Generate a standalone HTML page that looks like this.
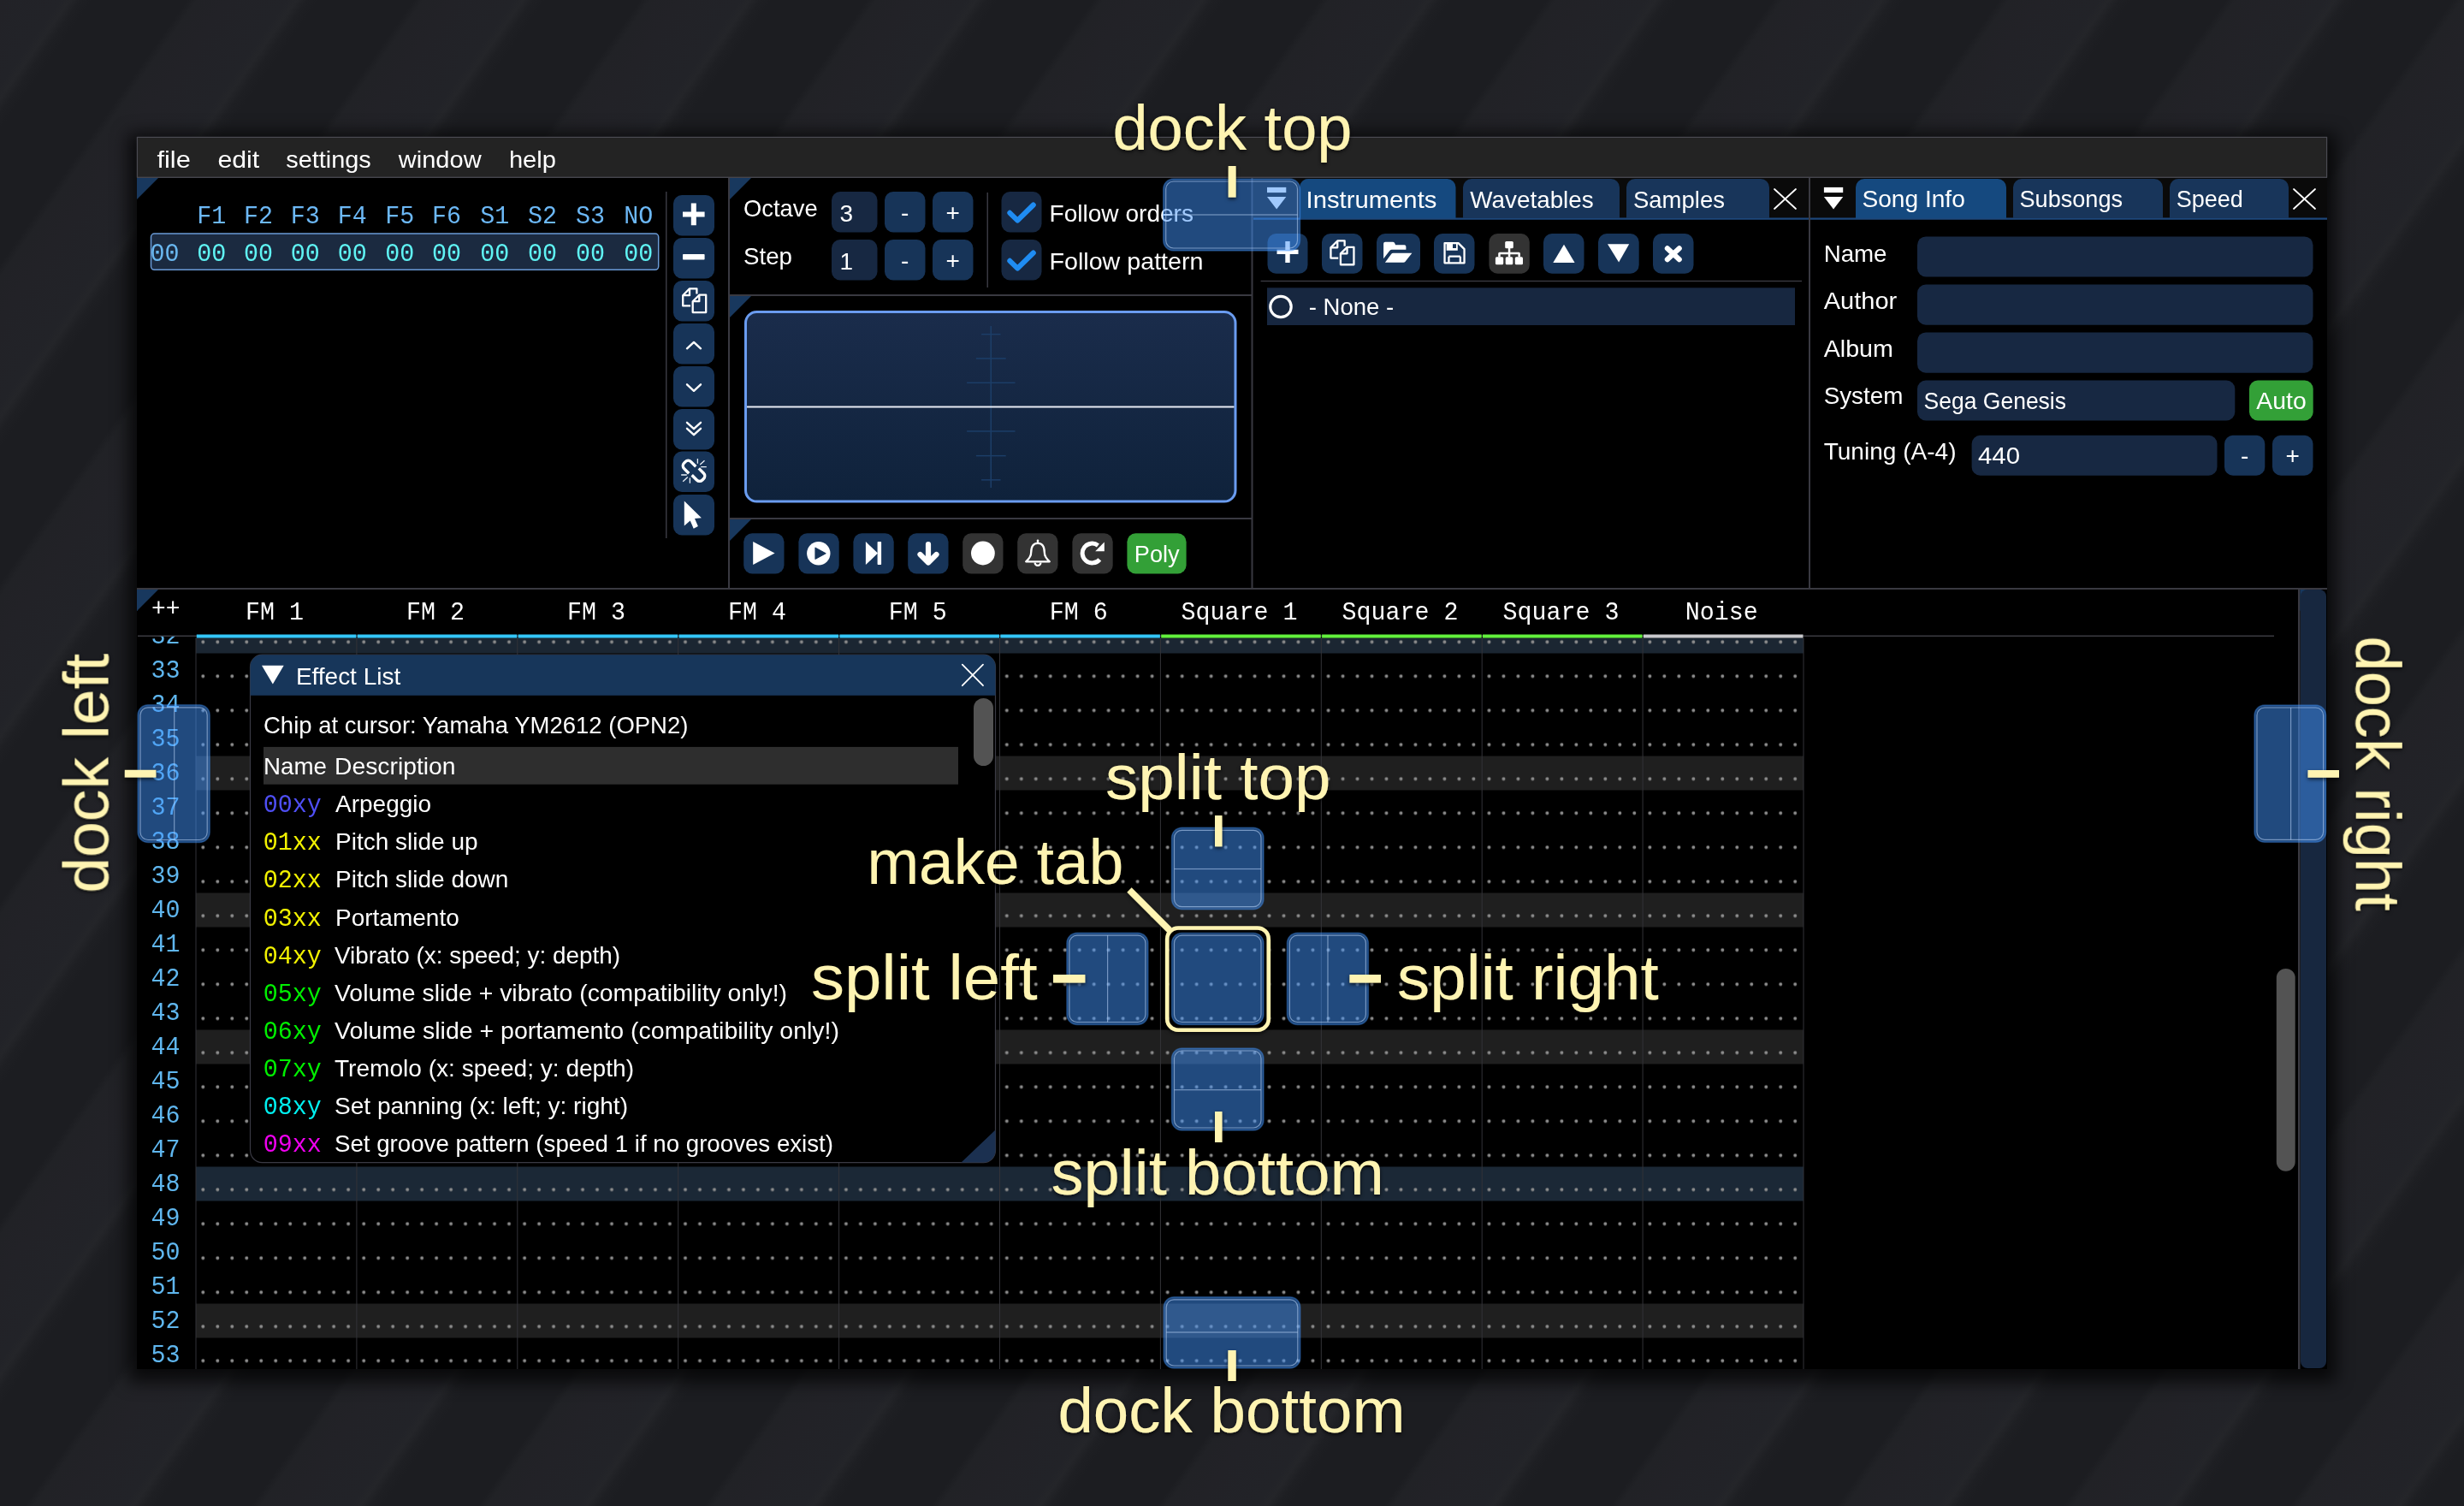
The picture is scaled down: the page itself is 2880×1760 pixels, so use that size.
<!DOCTYPE html>
<html><head><meta charset="utf-8"><style>
html,body{margin:0;padding:0;width:2880px;height:1760px;overflow:hidden}
body{background-color:#1f2024;background-image:repeating-linear-gradient(125.37deg,#222227 0px,#222328 57.7px,#242529 66.7px,#1e1f23 76.7px,#1c1d21 87.7px,#1c1d21 178.6px,#212226 187.6px,#222227 215.9px)}
svg{position:absolute;left:0;top:0;display:block;will-change:transform}
</style></head><body>
<svg width="2880" height="1760" viewBox="0 0 2880 1760">
<defs>
<style>
.sans{font-family:"Liberation Sans",sans-serif}
.mono{font-family:"Liberation Mono",monospace}
</style>
<pattern id="dots" patternUnits="userSpaceOnUse" width="16.98" height="40" x="0" y="0">
<circle cx="8.3" cy="26.7" r="2" fill="#8c8c8c"/>
</pattern>
<linearGradient id="scopeg" x1="0" y1="0" x2="0" y2="1">
<stop offset="0" stop-color="#1a2c4b"/><stop offset="1" stop-color="#0f223b"/>
</linearGradient>
<filter id="sh" x="-10%" y="-10%" width="120%" height="130%">
<feDropShadow dx="0" dy="2" stdDeviation="2" flood-color="#000" flood-opacity="0.7"/>
</filter>
<filter id="wsh" x="-5%" y="-5%" width="110%" height="110%">
<feGaussianBlur stdDeviation="10"/>
</filter>
</defs>
<rect x="150.0" y="156.0" width="2580.0" height="1459.0" fill="rgba(0,0,0,0.72)" filter="url(#wsh)"/>
<rect x="160.0" y="160.0" width="2560.0" height="1440.0" fill="#000"/>
<rect x="160.0" y="160.0" width="2560.0" height="47.0" fill="#232323"/>
<rect x="160.0" y="159.8" width="2560.0" height="1.2" fill="#4a4a52"/>
<rect x="160.0" y="206.6" width="2560.0" height="1.4" fill="#45454d"/>
<rect x="159.8" y="160.0" width="1.2" height="47.5" fill="#4a4a52"/>
<rect x="2719.0" y="160.0" width="1.2" height="47.5" fill="#4a4a52"/>
<text class="sans" x="183.4" y="195.5" font-size="28" fill="#fff" textLength="39.4" lengthAdjust="spacingAndGlyphs">file</text>
<text class="sans" x="254.4" y="195.5" font-size="28" fill="#fff" textLength="48.8" lengthAdjust="spacingAndGlyphs">edit</text>
<text class="sans" x="334.2" y="195.5" font-size="28" fill="#fff" textLength="99.6" lengthAdjust="spacingAndGlyphs">settings</text>
<text class="sans" x="465.8" y="195.5" font-size="28" fill="#fff" textLength="96.8" lengthAdjust="spacingAndGlyphs">window</text>
<text class="sans" x="594.9" y="195.5" font-size="28" fill="#fff" textLength="55.0" lengthAdjust="spacingAndGlyphs">help</text>
<rect x="851.0" y="208.0" width="2.0" height="480.0" fill="#393941"/>
<rect x="1462.5" y="208.0" width="2.0" height="480.0" fill="#393941"/>
<rect x="2114.0" y="208.0" width="2.0" height="480.0" fill="#393941"/>
<rect x="853.0" y="344.0" width="610.0" height="2.0" fill="#393941"/>
<rect x="853.0" y="605.0" width="610.0" height="2.0" fill="#393941"/>
<rect x="160.0" y="687.0" width="2560.0" height="2.0" fill="#393941"/>
<rect x="2686.0" y="689.0" width="2.5" height="911.0" fill="#393941"/>
<path d="M160 208 h25 L160 233 Z" fill="#18385e"/>
<path d="M853 208 h25 L853 233 Z" fill="#18385e"/>
<path d="M853 346 h25 L853 371 Z" fill="#18385e"/>
<path d="M853 607 h25 L853 632 Z" fill="#18385e"/>
<path d="M160 689 h25 L160 714 Z" fill="#18385e"/>
<rect x="176.5" y="273.0" width="593.2" height="42.3" rx="4" fill="#1b2a40" stroke="#6a9ad6" stroke-width="1.5"/>
<text class="mono" x="230.2" y="260.7" font-size="29.5" fill="#6cb8f6" textLength="34.0" lengthAdjust="spacingAndGlyphs">F1</text>
<text class="mono" x="230.2" y="305.3" font-size="29.5" fill="#5ff3f3" textLength="34.0" lengthAdjust="spacingAndGlyphs">00</text>
<text class="mono" x="284.9" y="260.7" font-size="29.5" fill="#6cb8f6" textLength="34.0" lengthAdjust="spacingAndGlyphs">F2</text>
<text class="mono" x="284.9" y="305.3" font-size="29.5" fill="#5ff3f3" textLength="34.0" lengthAdjust="spacingAndGlyphs">00</text>
<text class="mono" x="339.8" y="260.7" font-size="29.5" fill="#6cb8f6" textLength="34.0" lengthAdjust="spacingAndGlyphs">F3</text>
<text class="mono" x="339.8" y="305.3" font-size="29.5" fill="#5ff3f3" textLength="34.0" lengthAdjust="spacingAndGlyphs">00</text>
<text class="mono" x="394.8" y="260.7" font-size="29.5" fill="#6cb8f6" textLength="34.0" lengthAdjust="spacingAndGlyphs">F4</text>
<text class="mono" x="394.8" y="305.3" font-size="29.5" fill="#5ff3f3" textLength="34.0" lengthAdjust="spacingAndGlyphs">00</text>
<text class="mono" x="450.2" y="260.7" font-size="29.5" fill="#6cb8f6" textLength="34.0" lengthAdjust="spacingAndGlyphs">F5</text>
<text class="mono" x="450.2" y="305.3" font-size="29.5" fill="#5ff3f3" textLength="34.0" lengthAdjust="spacingAndGlyphs">00</text>
<text class="mono" x="505.0" y="260.7" font-size="29.5" fill="#6cb8f6" textLength="34.0" lengthAdjust="spacingAndGlyphs">F6</text>
<text class="mono" x="505.0" y="305.3" font-size="29.5" fill="#5ff3f3" textLength="34.0" lengthAdjust="spacingAndGlyphs">00</text>
<text class="mono" x="561.2" y="260.7" font-size="29.5" fill="#6cb8f6" textLength="34.0" lengthAdjust="spacingAndGlyphs">S1</text>
<text class="mono" x="561.2" y="305.3" font-size="29.5" fill="#5ff3f3" textLength="34.0" lengthAdjust="spacingAndGlyphs">00</text>
<text class="mono" x="616.9" y="260.7" font-size="29.5" fill="#6cb8f6" textLength="34.0" lengthAdjust="spacingAndGlyphs">S2</text>
<text class="mono" x="616.9" y="305.3" font-size="29.5" fill="#5ff3f3" textLength="34.0" lengthAdjust="spacingAndGlyphs">00</text>
<text class="mono" x="673.0" y="260.7" font-size="29.5" fill="#6cb8f6" textLength="34.0" lengthAdjust="spacingAndGlyphs">S3</text>
<text class="mono" x="673.0" y="305.3" font-size="29.5" fill="#5ff3f3" textLength="34.0" lengthAdjust="spacingAndGlyphs">00</text>
<text class="mono" x="729.2" y="260.7" font-size="29.5" fill="#6cb8f6" textLength="34.0" lengthAdjust="spacingAndGlyphs">NO</text>
<text class="mono" x="729.2" y="305.3" font-size="29.5" fill="#5ff3f3" textLength="34.0" lengthAdjust="spacingAndGlyphs">00</text>
<text class="mono" x="175.6" y="305.3" font-size="29.5" fill="#6ab8f0" textLength="34.0" lengthAdjust="spacingAndGlyphs">00</text>
<rect x="778.0" y="224.0" width="1.5" height="405.0" fill="#393941"/>
<rect x="787.0" y="228.0" width="48.0" height="47.5" rx="10" fill="#173458"/>
<rect x="787.0" y="278.0" width="48.0" height="47.5" rx="10" fill="#173458"/>
<rect x="787.0" y="328.0" width="48.0" height="47.5" rx="10" fill="#173458"/>
<rect x="787.0" y="378.0" width="48.0" height="47.5" rx="10" fill="#173458"/>
<rect x="787.0" y="428.0" width="48.0" height="47.5" rx="10" fill="#173458"/>
<rect x="787.0" y="478.0" width="48.0" height="47.5" rx="10" fill="#173458"/>
<rect x="787.0" y="527.5" width="48.0" height="47.5" rx="10" fill="#173458"/>
<rect x="787.0" y="578.0" width="48.0" height="47.5" rx="10" fill="#173458"/>
<path d="M807.80 237.60 h6.00 v9.80 h9.80 v6.00 h-9.80 v9.80 h-6.00 v-9.80 h-9.80 v-6.00 h9.80 Z" fill="#fff"/>
<rect x="798.0" y="297.0" width="25.6" height="6.5" rx="0.8" fill="#fff"/>
<g transform="translate(811.50,352.20)" fill="none" stroke="#fff" stroke-width="2.3" stroke-linejoin="round"><path d="M-4.5 5.2 H-13.3 V-7.0 L-5.5 -14.9 H2.9 V-8.6"/><path d="M-13.3 -7.0 H-5.5 V-14.9"/><path d="M-1.8 0 L5.8 -7.5 H13.7 V12.9 H-1.8 Z"/><path d="M-1.8 0 H5.8 V-7.5"/></g>
<path d="M803 407.3 L811 399.9 L819 407.3" fill="none" stroke="#fff" stroke-width="2.4" stroke-linecap="round" stroke-linejoin="round" stroke-linecap="butt"/>
<path d="M803 449.3 L811 456.8 L819 449.3" fill="none" stroke="#fff" stroke-width="2.4" stroke-linecap="round" stroke-linejoin="round" stroke-linecap="butt"/>
<path d="M803 493.8 L811 501.2 L819 493.8 M803 500.8 L811 508.2 L819 500.8" fill="none" stroke="#fff" stroke-width="2.4" stroke-linecap="round" stroke-linejoin="round" stroke-linecap="butt"/>
<g fill="none" stroke="#fff" stroke-width="3.4" stroke-linecap="butt" stroke-linejoin="round"><path d="M805.2 553.2 L799.6 547.6 A4.6 4.6 0 0 1 799.6 541.1 L801.1 539.6 A4.6 4.6 0 0 1 807.6 539.6 L813.3 545.3"/><path d="M816.8 547.4 L822.4 553 A4.6 4.6 0 0 1 822.4 559.5 L820.9 561 A4.6 4.6 0 0 1 814.4 561 L808.7 555.3"/></g>
<g stroke="#e8eef6" stroke-width="1.3" stroke-linecap="butt"><path d="M815.4 535.9 V541.8 M818.2 543.1 L823.5 538.2 M819.2 545.7 H825.8 M796.2 555 H802.8 M798.2 562.8 L803.8 557.6 M806.4 558.6 V564.8"/></g>
<path d="M799.8 585.5 V614.4 L806.7 608.5 L810.7 617.7 L815.9 615.1 L812 605.9 L819.9 605.2 Z" fill="#fff"/>
<text class="sans" x="869.0" y="252.8" font-size="28" fill="#fff" textLength="86.6" lengthAdjust="spacingAndGlyphs">Octave</text>
<text class="sans" x="869.0" y="309.0" font-size="28" fill="#fff" textLength="57.0" lengthAdjust="spacingAndGlyphs">Step</text>
<rect x="972.0" y="224.0" width="53.5" height="47.5" rx="10" fill="#172842"/>
<text class="sans" x="981.5" y="258.5" font-size="28" fill="#fff">3</text>
<rect x="1034.0" y="224.0" width="47.5" height="47.5" rx="10" fill="#173458"/>
<rect x="1090.0" y="224.0" width="47.5" height="47.5" rx="10" fill="#173458"/>
<text class="sans" x="1053.1" y="258.0" font-size="28" fill="#fff">-</text>
<text class="sans" x="1105.6" y="258.0" font-size="28" fill="#fff">+</text>
<rect x="972.0" y="280.0" width="53.5" height="47.5" rx="10" fill="#172842"/>
<text class="sans" x="981.5" y="314.5" font-size="28" fill="#fff">1</text>
<rect x="1034.0" y="280.0" width="47.5" height="47.5" rx="10" fill="#173458"/>
<rect x="1090.0" y="280.0" width="47.5" height="47.5" rx="10" fill="#173458"/>
<text class="sans" x="1053.1" y="314.0" font-size="28" fill="#fff">-</text>
<text class="sans" x="1105.6" y="314.0" font-size="28" fill="#fff">+</text>
<rect x="1153.5" y="225.0" width="1.5" height="111.0" fill="#393941"/>
<rect x="1170.5" y="224.0" width="47.0" height="47.5" rx="10" fill="#172842"/>
<path d="M1180.3 248.8 L1189.3 257.6 L1207.8 239.5" fill="none" stroke="#1f8cf2" stroke-width="6" stroke-linecap="round" stroke-linejoin="round" stroke-linecap="butt" stroke-linejoin="miter"/>
<text class="sans" x="1226.5" y="259.0" font-size="28" fill="#fff" textLength="168.5" lengthAdjust="spacingAndGlyphs">Follow orders</text>
<rect x="1170.5" y="280.0" width="47.0" height="47.5" rx="10" fill="#172842"/>
<path d="M1180.3 304.8 L1189.3 313.6 L1207.8 295.5" fill="none" stroke="#1f8cf2" stroke-width="6" stroke-linecap="round" stroke-linejoin="round" stroke-linecap="butt" stroke-linejoin="miter"/>
<text class="sans" x="1226.5" y="315.0" font-size="28" fill="#fff" textLength="180.0" lengthAdjust="spacingAndGlyphs">Follow pattern</text>
<rect x="871.5" y="364.5" width="572.5" height="221.5" rx="13" fill="url(#scopeg)" stroke="#6a9cf0" stroke-width="3"/>
<rect x="1157.5" y="381.0" width="1.5" height="189.0" fill="#1c3e68"/>
<rect x="1147.1" y="389.9" width="22.4" height="1.5" fill="#1c3e68"/>
<rect x="1140.9" y="418.2" width="34.8" height="1.5" fill="#1c3e68"/>
<rect x="1130.1" y="446.6" width="56.4" height="1.5" fill="#1c3e68"/>
<rect x="1130.1" y="503.2" width="56.4" height="1.5" fill="#1c3e68"/>
<rect x="1140.9" y="531.9" width="34.8" height="1.5" fill="#1c3e68"/>
<rect x="1147.1" y="560.1" width="22.4" height="1.5" fill="#1c3e68"/>
<rect x="873.0" y="474.5" width="569.5" height="2.0" fill="#e8ecf4"/>
<rect x="869.2" y="623.2" width="47.3" height="47.2" rx="10" fill="#173458"/>
<rect x="933.4" y="623.2" width="47.3" height="47.2" rx="10" fill="#173458"/>
<rect x="997.4" y="623.2" width="47.3" height="47.2" rx="10" fill="#173458"/>
<rect x="1061.2" y="623.2" width="47.3" height="47.2" rx="10" fill="#173458"/>
<rect x="1125.2" y="623.2" width="47.3" height="47.2" rx="10" fill="#333333"/>
<rect x="1189.2" y="623.2" width="47.3" height="47.2" rx="10" fill="#333333"/>
<rect x="1253.4" y="623.2" width="47.3" height="47.2" rx="10" fill="#333333"/>
<rect x="1317.4" y="623.2" width="69.2" height="47.2" rx="10" fill="#33a037"/>
<text class="sans" x="1325.8" y="657.1" font-size="28" fill="#fff" textLength="52.8" lengthAdjust="spacingAndGlyphs">Poly</text>
<path d="M880.2 633 V660.1 L905.6 646.6 Z" fill="#fff"/>
<circle cx="956.8" cy="646.7" r="13.7" fill="#fff"/>
<path d="M953 640.2 V653.2 L965 646.7 Z" fill="#173458" stroke="#173458" stroke-width="1.2" stroke-linejoin="round"/>
<path d="M1011.9 633 V660.1 L1026 646.6 Z" fill="#fff"/>
<rect x="1025.6" y="633.0" width="4.5" height="27.1" rx="0.8" fill="#fff"/>
<path d="M1085 636 V655 M1075.5 648 L1085 657.5 L1094.5 648" fill="none" stroke="#fff" stroke-width="6.2" stroke-linecap="round" stroke-linejoin="round" stroke-linecap="round" stroke-linejoin="round"/>
<circle cx="1148.9" cy="646.5" r="13.9" fill="#fff"/>
<g fill="none" stroke="#fff" stroke-width="2.3" stroke-linejoin="round"><path d="M1213 634.8 C1206.2 634.8 1205.2 640.5 1205.2 645.5 C1205.2 650.5 1203 653 1199.2 656.3 H1226.8 C1223 653 1220.8 650.5 1220.8 645.5 C1220.8 640.5 1219.8 634.8 1213 634.8 Z"/><path d="M1209.6 657.5 A3.4 3.4 0 0 0 1216.4 657.5"/></g>
<rect x="1211.8" y="630.5" width="2.4" height="4.0" rx="1" fill="#fff"/>
<path d="M1285.3 653.8 A11.4 11.4 0 1 1 1283.4 637.4" fill="none" stroke="#fff" stroke-width="5"/>
<path d="M1290.8 633.6 V644.3 H1280.2 Z" fill="#fff"/>
<rect x="1465.0" y="254.5" width="649.0" height="2.0" fill="#1d477a"/>
<rect x="1465.0" y="208.0" width="649.0" height="47.0" fill="#0a0a0a"/>
<rect x="1465.0" y="254.5" width="649.0" height="2.0" fill="#1d477a"/>
<rect x="1481.0" y="218.9" width="22.3" height="6.2" fill="#fff"/>
<path d="M1481 230 h22.3 l-11.15 14.5 Z" fill="#fff"/>
<path d="M1519 255 v-36 a10 10 0 0 1 10 -10 h162.5 a10 10 0 0 1 10 10 v36 Z" fill="#15497f"/>
<text class="sans" x="1526.5" y="242.7" font-size="28" fill="#fff" textLength="152.9" lengthAdjust="spacingAndGlyphs">Instruments</text>
<path d="M1710 255 v-36 a10 10 0 0 1 10 -10 h163 a10 10 0 0 1 10 10 v36 Z" fill="#18355a"/>
<text class="sans" x="1718.3" y="242.7" font-size="28" fill="#fff" textLength="144.4" lengthAdjust="spacingAndGlyphs">Wavetables</text>
<path d="M1901 255 v-36 a10 10 0 0 1 10 -10 h147 a10 10 0 0 1 10 10 v36 Z" fill="#18355a"/>
<text class="sans" x="1909.0" y="242.7" font-size="28" fill="#fff" textLength="106.9" lengthAdjust="spacingAndGlyphs">Samples</text>
<path d="M2074 221 l25 23 M2099 221 l-25 23" fill="none" stroke="#fff" stroke-width="1.8" stroke-linecap="round" stroke-linejoin="round" stroke-linecap="butt"/>
<rect x="1481.5" y="273.0" width="47.0" height="46.7" rx="10" fill="#173458"/>
<rect x="1545.0" y="273.0" width="47.5" height="46.7" rx="10" fill="#173458"/>
<rect x="1609.0" y="273.0" width="51.0" height="46.7" rx="10" fill="#173458"/>
<rect x="1676.0" y="273.0" width="47.5" height="46.7" rx="10" fill="#173458"/>
<rect x="1740.4" y="273.0" width="47.4" height="46.7" rx="10" fill="#333333"/>
<rect x="1804.0" y="273.0" width="47.5" height="46.7" rx="10" fill="#173458"/>
<rect x="1868.0" y="273.0" width="47.7" height="46.7" rx="10" fill="#173458"/>
<rect x="1932.0" y="273.0" width="47.5" height="46.7" rx="10" fill="#173458"/>
<path d="M1502.30 281.90 h5.40 v9.80 h9.80 v5.40 h-9.80 v9.80 h-5.40 v-9.80 h-9.80 v-5.40 h9.80 Z" fill="#fff"/>
<g transform="translate(1568.75,296.35)" fill="none" stroke="#fff" stroke-width="2.3" stroke-linejoin="round"><path d="M-4.5 5.2 H-13.3 V-7.0 L-5.5 -14.9 H2.9 V-8.6"/><path d="M-13.3 -7.0 H-5.5 V-14.9"/><path d="M-1.8 0 L5.8 -7.5 H13.7 V12.9 H-1.8 Z"/><path d="M-1.8 0 H5.8 V-7.5"/></g>
<g transform="translate(1634.5,296.35)" fill="#fff"><path d="M-17.4 5.8 V-11.7 Q-17.4 -13.7 -15.4 -13.7 H-6.6 Q-5.2 -13.7 -4.4 -12.3 L-3.4 -10 H6.9 Q8.9 -10 8.9 -8 V-4.6 H-7.6 Q-9.2 -4.6 -10.2 -3.4 Z"/><path d="M-15.6 10.45 L-8.4 0.6 Q-7.5 -0.6 -6 -0.6 H15.9 L8.2 9.2 Q7.2 10.45 5.8 10.45 Z"/></g>
<g transform="translate(1699.75,296.35)"><path d="M-11.2 -12.2 H4.8 L11.8 -5.2 V11 H-11.2 Z M-6.3 3.3 V11 M7.1 3.3 V11 M-6.3 3.3 H7.1" fill="none" stroke="#fff" stroke-width="2.3" stroke-linejoin="round"/><path d="M-9.05 -13 H4.05 V-3.65 H-9.05 Z M-1.75 -11.4 V-6.3 H2.25 V-11.4 Z" fill="#fff" fill-rule="evenodd"/></g>
<g transform="translate(1764.1,296.35)" fill="#fff"><rect x="-4.9" y="-14.25" width="9.6" height="8.1" rx="1.5"/><rect x="-1.3" y="-6.5" width="2.5" height="10.5"/><path d="M-12.9 3.95 V-0.05 Q-12.9 -1.55 -11.4 -1.55 H11.3 Q12.8 -1.55 12.8 -0.05 V3.95 H10.3 V0.95 H-10.4 V3.95 Z"/><rect x="-16.2" y="3.95" width="9.3" height="8.9" rx="1.5"/><rect x="-4.4" y="3.95" width="8.6" height="8.9" rx="1.5"/><rect x="6.7" y="3.95" width="9.2" height="8.9" rx="1.5"/></g>
<path d="M1815.3 306.9 H1840.6 L1828 285.7 Z" fill="#fff"/>
<path d="M1879 285.2 H1904.2 L1892.1 306.4 Z" fill="#fff"/>
<path d="M1948.8 290.3 L1962.8 303.3 M1962.8 290.3 L1948.8 303.3" fill="none" stroke="#fff" stroke-width="6" stroke-linecap="round" stroke-linejoin="round" stroke-linecap="round"/>
<rect x="1473.6" y="327.8" width="632.4" height="1.4" fill="#393941"/>
<rect x="1481.0" y="336.3" width="617.0" height="43.7" fill="#172740"/>
<circle cx="1497" cy="358.5" r="12.2" fill="none" stroke="#fff" stroke-width="3.2"/>
<text class="sans" x="1529.7" y="368.3" font-size="28" fill="#fff" textLength="99.6" lengthAdjust="spacingAndGlyphs">- None -</text>
<rect x="2116.0" y="254.5" width="604.0" height="2.0" fill="#1d477a"/>
<rect x="2116.0" y="208.0" width="604.0" height="47.0" fill="#0a0a0a"/>
<rect x="2116.0" y="254.5" width="604.0" height="2.0" fill="#1d477a"/>
<rect x="2131.9" y="218.9" width="22.3" height="6.2" fill="#fff"/>
<path d="M2131.9 230 h22.3 l-11.15 14.5 Z" fill="#fff"/>
<path d="M2169 255 v-36 a10 10 0 0 1 10 -10 h156 a10 10 0 0 1 10 10 v36 Z" fill="#15497f"/>
<text class="sans" x="2176.4" y="242.2" font-size="28" fill="#fff" textLength="120.4" lengthAdjust="spacingAndGlyphs">Song Info</text>
<path d="M2353 255 v-36 a10 10 0 0 1 10 -10 h155 a10 10 0 0 1 10 10 v36 Z" fill="#18355a"/>
<text class="sans" x="2360.5" y="242.2" font-size="28" fill="#fff" textLength="120.5" lengthAdjust="spacingAndGlyphs">Subsongs</text>
<path d="M2536 255 v-36 a10 10 0 0 1 10 -10 h119 a10 10 0 0 1 10 10 v36 Z" fill="#18355a"/>
<text class="sans" x="2543.8" y="242.2" font-size="28" fill="#fff" textLength="78.1" lengthAdjust="spacingAndGlyphs">Speed</text>
<path d="M2681 221 l25 23 M2706 221 l-25 23" fill="none" stroke="#fff" stroke-width="1.8" stroke-linecap="round" stroke-linejoin="round" stroke-linecap="butt"/>
<text class="sans" x="2131.7" y="305.7" font-size="28" fill="#fff" textLength="73.8" lengthAdjust="spacingAndGlyphs">Name</text>
<text class="sans" x="2131.7" y="361.0" font-size="28" fill="#fff" textLength="85.6" lengthAdjust="spacingAndGlyphs">Author</text>
<text class="sans" x="2131.7" y="416.7" font-size="28" fill="#fff" textLength="81.2" lengthAdjust="spacingAndGlyphs">Album</text>
<text class="sans" x="2131.7" y="472.0" font-size="28" fill="#fff" textLength="92.6" lengthAdjust="spacingAndGlyphs">System</text>
<text class="sans" x="2131.7" y="536.5" font-size="28" fill="#fff" textLength="154.8" lengthAdjust="spacingAndGlyphs">Tuning (A-4)</text>
<rect x="2241.0" y="276.4" width="462.5" height="47.0" rx="10" fill="#172842"/>
<rect x="2241.0" y="332.5" width="462.5" height="47.3" rx="10" fill="#172842"/>
<rect x="2241.0" y="388.4" width="462.5" height="47.4" rx="10" fill="#172842"/>
<rect x="2241.0" y="444.5" width="371.3" height="47.0" rx="10" fill="#172842"/>
<rect x="2629.0" y="444.5" width="74.7" height="47.0" rx="10" fill="#33a037"/>
<text class="sans" x="2248.6" y="478.0" font-size="28" fill="#fff" textLength="166.4" lengthAdjust="spacingAndGlyphs">Sega Genesis</text>
<text class="sans" x="2637.3" y="478.0" font-size="28" fill="#fff" textLength="58.4" lengthAdjust="spacingAndGlyphs">Auto</text>
<rect x="2304.6" y="508.7" width="286.9" height="47.0" rx="10" fill="#172842"/>
<rect x="2600.0" y="508.7" width="47.3" height="47.0" rx="10" fill="#173458"/>
<rect x="2656.0" y="508.7" width="47.5" height="47.0" rx="10" fill="#173458"/>
<text class="sans" x="2312.0" y="542.0" font-size="28" fill="#fff" textLength="49.0" lengthAdjust="spacingAndGlyphs">440</text>
<text class="sans" x="2618.9" y="542.0" font-size="28" fill="#fff">-</text>
<text class="sans" x="2671.5" y="542.0" font-size="28" fill="#fff">+</text>
<rect x="229.0" y="745.5" width="1879.0" height="18.0" fill="#1b2632"/>
<rect x="229.0" y="883.5" width="1879.0" height="40.0" fill="#1f1f1f"/>
<rect x="229.0" y="1043.5" width="1879.0" height="40.0" fill="#1f1f1f"/>
<rect x="229.0" y="1203.5" width="1879.0" height="40.0" fill="#1f1f1f"/>
<rect x="229.0" y="1363.5" width="1879.0" height="40.0" fill="#1b2836"/>
<rect x="229.0" y="1523.5" width="1879.0" height="40.0" fill="#1f1f1f"/>
<g transform="translate(229.00,723.50)"><rect x="0" y="0" width="187.9" height="876.5" fill="url(#dots)"/></g>
<g transform="translate(416.90,723.50)"><rect x="0" y="0" width="187.9" height="876.5" fill="url(#dots)"/></g>
<g transform="translate(604.80,723.50)"><rect x="0" y="0" width="187.9" height="876.5" fill="url(#dots)"/></g>
<g transform="translate(792.70,723.50)"><rect x="0" y="0" width="187.9" height="876.5" fill="url(#dots)"/></g>
<g transform="translate(980.60,723.50)"><rect x="0" y="0" width="187.9" height="876.5" fill="url(#dots)"/></g>
<g transform="translate(1168.50,723.50)"><rect x="0" y="0" width="187.9" height="876.5" fill="url(#dots)"/></g>
<g transform="translate(1356.40,723.50)"><rect x="0" y="0" width="187.9" height="876.5" fill="url(#dots)"/></g>
<g transform="translate(1544.30,723.50)"><rect x="0" y="0" width="187.9" height="876.5" fill="url(#dots)"/></g>
<g transform="translate(1732.20,723.50)"><rect x="0" y="0" width="187.9" height="876.5" fill="url(#dots)"/></g>
<g transform="translate(1920.10,723.50)"><rect x="0" y="0" width="187.9" height="876.5" fill="url(#dots)"/></g>
<rect x="228.5" y="745.5" width="1.0" height="854.5" fill="#333338"/>
<rect x="416.4" y="745.5" width="1.0" height="854.5" fill="#333338"/>
<rect x="604.3" y="745.5" width="1.0" height="854.5" fill="#333338"/>
<rect x="792.2" y="745.5" width="1.0" height="854.5" fill="#333338"/>
<rect x="980.1" y="745.5" width="1.0" height="854.5" fill="#333338"/>
<rect x="1168.0" y="745.5" width="1.0" height="854.5" fill="#333338"/>
<rect x="1355.9" y="745.5" width="1.0" height="854.5" fill="#333338"/>
<rect x="1543.8" y="745.5" width="1.0" height="854.5" fill="#333338"/>
<rect x="1731.7" y="745.5" width="1.0" height="854.5" fill="#333338"/>
<rect x="1919.6" y="745.5" width="1.0" height="854.5" fill="#333338"/>
<rect x="2107.5" y="745.5" width="1.0" height="854.5" fill="#333338"/>
<rect x="161.0" y="689.0" width="2525.0" height="54.0" fill="#000"/>
<path d="M160 689 h25 L160 714 Z" fill="#18385e"/>
<text class="mono" x="177.0" y="720.2" font-size="29.5" fill="#fff" textLength="33.5" lengthAdjust="spacingAndGlyphs">++</text>
<text class="mono" x="287.1" y="724.2" font-size="29.5" fill="#fff" textLength="68.0" lengthAdjust="spacingAndGlyphs">FM 1</text>
<text class="mono" x="475.0" y="724.2" font-size="29.5" fill="#fff" textLength="68.0" lengthAdjust="spacingAndGlyphs">FM 2</text>
<text class="mono" x="663.0" y="724.2" font-size="29.5" fill="#fff" textLength="68.0" lengthAdjust="spacingAndGlyphs">FM 3</text>
<text class="mono" x="850.9" y="724.2" font-size="29.5" fill="#fff" textLength="68.0" lengthAdjust="spacingAndGlyphs">FM 4</text>
<text class="mono" x="1038.8" y="724.2" font-size="29.5" fill="#fff" textLength="68.0" lengthAdjust="spacingAndGlyphs">FM 5</text>
<text class="mono" x="1226.7" y="724.2" font-size="29.5" fill="#fff" textLength="68.0" lengthAdjust="spacingAndGlyphs">FM 6</text>
<text class="mono" x="1380.6" y="724.2" font-size="29.5" fill="#fff" textLength="136.0" lengthAdjust="spacingAndGlyphs">Square 1</text>
<text class="mono" x="1568.5" y="724.2" font-size="29.5" fill="#fff" textLength="136.0" lengthAdjust="spacingAndGlyphs">Square 2</text>
<text class="mono" x="1756.4" y="724.2" font-size="29.5" fill="#fff" textLength="136.0" lengthAdjust="spacingAndGlyphs">Square 3</text>
<text class="mono" x="1969.8" y="724.2" font-size="29.5" fill="#fff" textLength="85.0" lengthAdjust="spacingAndGlyphs">Noise</text>
<rect x="161.0" y="742.6" width="2497.0" height="1.2" fill="#4a4a52"/>
<rect x="229.8" y="741.5" width="186.6" height="4.0" fill="#34c6f8"/>
<rect x="417.7" y="741.5" width="186.6" height="4.0" fill="#34c6f8"/>
<rect x="605.6" y="741.5" width="186.6" height="4.0" fill="#34c6f8"/>
<rect x="793.5" y="741.5" width="186.6" height="4.0" fill="#34c6f8"/>
<rect x="981.4" y="741.5" width="186.6" height="4.0" fill="#34c6f8"/>
<rect x="1169.3" y="741.5" width="186.6" height="4.0" fill="#34c6f8"/>
<rect x="1357.2" y="741.5" width="186.6" height="4.0" fill="#62f03c"/>
<rect x="1545.1" y="741.5" width="186.6" height="4.0" fill="#62f03c"/>
<rect x="1733.0" y="741.5" width="186.6" height="4.0" fill="#62f03c"/>
<rect x="1920.9" y="741.5" width="186.6" height="4.0" fill="#c8c8cc"/>
<text class="mono" x="176.5" y="791.8" font-size="29.5" fill="#5fb6ee" textLength="34.0" lengthAdjust="spacingAndGlyphs">33</text>
<text class="mono" x="176.5" y="831.8" font-size="29.5" fill="#5fb6ee" textLength="34.0" lengthAdjust="spacingAndGlyphs">34</text>
<text class="mono" x="176.5" y="871.8" font-size="29.5" fill="#5fb6ee" textLength="34.0" lengthAdjust="spacingAndGlyphs">35</text>
<text class="mono" x="176.5" y="911.8" font-size="29.5" fill="#5fb6ee" textLength="34.0" lengthAdjust="spacingAndGlyphs">36</text>
<text class="mono" x="176.5" y="951.8" font-size="29.5" fill="#5fb6ee" textLength="34.0" lengthAdjust="spacingAndGlyphs">37</text>
<text class="mono" x="176.5" y="991.8" font-size="29.5" fill="#5fb6ee" textLength="34.0" lengthAdjust="spacingAndGlyphs">38</text>
<text class="mono" x="176.5" y="1031.8" font-size="29.5" fill="#5fb6ee" textLength="34.0" lengthAdjust="spacingAndGlyphs">39</text>
<text class="mono" x="176.5" y="1071.8" font-size="29.5" fill="#5fb6ee" textLength="34.0" lengthAdjust="spacingAndGlyphs">40</text>
<text class="mono" x="176.5" y="1111.8" font-size="29.5" fill="#5fb6ee" textLength="34.0" lengthAdjust="spacingAndGlyphs">41</text>
<text class="mono" x="176.5" y="1151.8" font-size="29.5" fill="#5fb6ee" textLength="34.0" lengthAdjust="spacingAndGlyphs">42</text>
<text class="mono" x="176.5" y="1191.8" font-size="29.5" fill="#5fb6ee" textLength="34.0" lengthAdjust="spacingAndGlyphs">43</text>
<text class="mono" x="176.5" y="1231.8" font-size="29.5" fill="#5fb6ee" textLength="34.0" lengthAdjust="spacingAndGlyphs">44</text>
<text class="mono" x="176.5" y="1271.8" font-size="29.5" fill="#5fb6ee" textLength="34.0" lengthAdjust="spacingAndGlyphs">45</text>
<text class="mono" x="176.5" y="1311.8" font-size="29.5" fill="#5fb6ee" textLength="34.0" lengthAdjust="spacingAndGlyphs">46</text>
<text class="mono" x="176.5" y="1351.8" font-size="29.5" fill="#5fb6ee" textLength="34.0" lengthAdjust="spacingAndGlyphs">47</text>
<text class="mono" x="176.5" y="1391.8" font-size="29.5" fill="#5fb6ee" textLength="34.0" lengthAdjust="spacingAndGlyphs">48</text>
<text class="mono" x="176.5" y="1431.8" font-size="29.5" fill="#5fb6ee" textLength="34.0" lengthAdjust="spacingAndGlyphs">49</text>
<text class="mono" x="176.5" y="1471.8" font-size="29.5" fill="#5fb6ee" textLength="34.0" lengthAdjust="spacingAndGlyphs">50</text>
<text class="mono" x="176.5" y="1511.8" font-size="29.5" fill="#5fb6ee" textLength="34.0" lengthAdjust="spacingAndGlyphs">51</text>
<text class="mono" x="176.5" y="1551.8" font-size="29.5" fill="#5fb6ee" textLength="34.0" lengthAdjust="spacingAndGlyphs">52</text>
<text class="mono" x="176.5" y="1591.8" font-size="29.5" fill="#5fb6ee" textLength="34.0" lengthAdjust="spacingAndGlyphs">53</text>
<svg x="160" y="743.8" width="69" height="30" overflow="hidden">
<text class="mono" x="16.5" y="8.0" font-size="29.5" fill="#5fb6ee" textLength="34.0" lengthAdjust="spacingAndGlyphs">32</text>
</svg>
<rect x="2660.8" y="1131.9" width="21.9" height="236.8" rx="10.9" fill="#535353"/>
<path d="M2688.5 689 h25 L2688.5 714 Z" fill="#18385e"/>
<path d="M2689 1591 V697 a8 8 0 0 1 8 -8 h14 a8 8 0 0 1 8 8 V1591 a8 8 0 0 1 -8 8 h-14 a8 8 0 0 1 -8 -8 Z" fill="#17273f"/>
<path d="M292.5 1344.6 V779.2 a14 14 0 0 1 14 -14 H1149.5 a14 14 0 0 1 14 14 V1344.6 a14 14 0 0 1 -14 14 H306.5 a14 14 0 0 1 -14 -14 Z" fill="#000" stroke="#3a3a44" stroke-width="1.2"/>
<path d="M292.5 812.8 V779.2 a14 14 0 0 1 14 -14 H1149.5 a14 14 0 0 1 14 14 V812.8 Z" fill="#17365a"/>
<path d="M306 777.7 h25.7 l-12.85 21.9 Z" fill="#fff"/>
<text class="sans" x="345.9" y="800.2" font-size="28" fill="#fff" textLength="122.3" lengthAdjust="spacingAndGlyphs">Effect List</text>
<path d="M1124.8 776.7 l24.2 24.5 M1149 776.7 l-24.2 24.5" fill="none" stroke="#fff" stroke-width="1.8" stroke-linecap="round" stroke-linejoin="round" stroke-linecap="butt"/>
<rect x="1138.0" y="816.0" width="23.0" height="79.0" rx="11.5" fill="#535353"/>
<text class="sans" x="308.0" y="856.8" font-size="28" fill="#fff" textLength="496.4" lengthAdjust="spacingAndGlyphs">Chip at cursor: Yamaha YM2612 (OPN2)</text>
<rect x="308.0" y="872.9" width="812.0" height="43.8" fill="#2e2e2e"/>
<text class="sans" x="308.0" y="905.0" font-size="28" fill="#fff" textLength="73.9" lengthAdjust="spacingAndGlyphs">Name</text>
<text class="sans" x="391.0" y="905.0" font-size="28" fill="#fff" textLength="141.6" lengthAdjust="spacingAndGlyphs">Description</text>
<text class="mono" x="307.7" y="949.0" font-size="29.5" fill="#4f4ff5" textLength="68.0" lengthAdjust="spacingAndGlyphs">00xy</text>
<text class="sans" x="392.0" y="949.0" font-size="28" fill="#fff">Arpeggio</text>
<text class="mono" x="307.7" y="993.1" font-size="29.5" fill="#f2f200" textLength="68.0" lengthAdjust="spacingAndGlyphs">01xx</text>
<text class="sans" x="392.0" y="993.1" font-size="28" fill="#fff">Pitch slide up</text>
<text class="mono" x="307.7" y="1037.3" font-size="29.5" fill="#f2f200" textLength="68.0" lengthAdjust="spacingAndGlyphs">02xx</text>
<text class="sans" x="392.0" y="1037.3" font-size="28" fill="#fff">Pitch slide down</text>
<text class="mono" x="307.7" y="1081.5" font-size="29.5" fill="#f2f200" textLength="68.0" lengthAdjust="spacingAndGlyphs">03xx</text>
<text class="sans" x="392.0" y="1081.5" font-size="28" fill="#fff">Portamento</text>
<text class="mono" x="307.7" y="1125.6" font-size="29.5" fill="#f2f200" textLength="68.0" lengthAdjust="spacingAndGlyphs">04xy</text>
<text class="sans" x="391.0" y="1125.6" font-size="28" fill="#fff" textLength="334.0" lengthAdjust="spacingAndGlyphs">Vibrato (x: speed; y: depth)</text>
<text class="mono" x="307.7" y="1169.8" font-size="29.5" fill="#00f000" textLength="68.0" lengthAdjust="spacingAndGlyphs">05xy</text>
<text class="sans" x="391.0" y="1169.8" font-size="28" fill="#fff" textLength="529.0" lengthAdjust="spacingAndGlyphs">Volume slide + vibrato (compatibility only!)</text>
<text class="mono" x="307.7" y="1213.9" font-size="29.5" fill="#00f000" textLength="68.0" lengthAdjust="spacingAndGlyphs">06xy</text>
<text class="sans" x="391.0" y="1213.9" font-size="28" fill="#fff" textLength="590.0" lengthAdjust="spacingAndGlyphs">Volume slide + portamento (compatibility only!)</text>
<text class="mono" x="307.7" y="1258.0" font-size="29.5" fill="#00f000" textLength="68.0" lengthAdjust="spacingAndGlyphs">07xy</text>
<text class="sans" x="391.0" y="1258.0" font-size="28" fill="#fff" textLength="350.0" lengthAdjust="spacingAndGlyphs">Tremolo (x: speed; y: depth)</text>
<text class="mono" x="307.7" y="1302.2" font-size="29.5" fill="#00f0f0" textLength="68.0" lengthAdjust="spacingAndGlyphs">08xy</text>
<text class="sans" x="391.0" y="1302.2" font-size="28" fill="#fff" textLength="343.0" lengthAdjust="spacingAndGlyphs">Set panning (x: left; y: right)</text>
<text class="mono" x="307.7" y="1346.3" font-size="29.5" fill="#f000f0" textLength="68.0" lengthAdjust="spacingAndGlyphs">09xx</text>
<text class="sans" x="391.0" y="1346.3" font-size="28" fill="#fff" textLength="583.0" lengthAdjust="spacingAndGlyphs">Set groove pattern (speed 1 if no grooves exist)</text>
<path d="M1163.5 1320.5 V1344.6 a14 14 0 0 1 -14 14 H1123.5 Z" fill="#1b3050"/>
<rect x="1359.7" y="209" width="159.8" height="84" rx="12" fill="rgba(66,148,252,0.5)" stroke="rgba(66,148,252,0.35)" stroke-width="1.5"/>
<rect x="1362.7" y="212" width="153.8" height="78" rx="9" fill="none" stroke="rgba(190,215,250,0.55)" stroke-width="1.2"/>
<rect x="1362.7" y="250.4" width="153.8" height="1.2" fill="rgba(190,215,250,0.55)"/>
<rect x="161" y="823.8" width="84.2" height="160.7" rx="12" fill="rgba(66,148,252,0.5)" stroke="rgba(66,148,252,0.35)" stroke-width="1.5"/>
<rect x="164" y="826.8" width="78.2" height="154.7" rx="9" fill="none" stroke="rgba(190,215,250,0.55)" stroke-width="1.2"/>
<rect x="203.1" y="826.8" width="1.2" height="154.7" fill="rgba(190,215,250,0.55)"/>
<rect x="2635" y="824" width="83.6" height="160.3" rx="12" fill="rgba(66,148,252,0.5)" stroke="rgba(66,148,252,0.35)" stroke-width="1.5"/>
<rect x="2638" y="827" width="77.6" height="154.3" rx="9" fill="none" stroke="rgba(190,215,250,0.55)" stroke-width="1.2"/>
<rect x="2677.0" y="827.0" width="1.2" height="154.3" fill="rgba(190,215,250,0.55)"/>
<rect x="1360.2" y="1515.8" width="159.6" height="83.2" rx="12" fill="rgba(66,148,252,0.5)" stroke="rgba(66,148,252,0.35)" stroke-width="1.5"/>
<rect x="1363.2" y="1518.8" width="153.6" height="77.2" rx="9" fill="none" stroke="rgba(190,215,250,0.55)" stroke-width="1.2"/>
<rect x="1363.2" y="1556.4" width="153.6" height="1.2" fill="rgba(190,215,250,0.55)"/>
<rect x="1369.5" y="967.3" width="107.5" height="95.4" rx="12" fill="rgba(66,148,252,0.5)" stroke="rgba(66,148,252,0.35)" stroke-width="1.5"/>
<rect x="1372.5" y="970.3" width="101.5" height="89.4" rx="9" fill="none" stroke="rgba(190,215,250,0.55)" stroke-width="1.2"/>
<rect x="1372.5" y="1014.9" width="101.5" height="1.2" fill="rgba(190,215,250,0.55)"/>
<rect x="1369.5" y="1090.2" width="107.5" height="107.3" rx="12" fill="rgba(66,148,252,0.5)" stroke="rgba(66,148,252,0.35)" stroke-width="1.5"/>
<rect x="1372.5" y="1093.2" width="101.5" height="101.3" rx="9" fill="none" stroke="rgba(190,215,250,0.55)" stroke-width="1.2"/>
<rect x="1246.9" y="1090.2" width="95" height="107.3" rx="12" fill="rgba(66,148,252,0.5)" stroke="rgba(66,148,252,0.35)" stroke-width="1.5"/>
<rect x="1249.9" y="1093.2" width="89" height="101.3" rx="9" fill="none" stroke="rgba(190,215,250,0.55)" stroke-width="1.2"/>
<rect x="1294.0" y="1093.2" width="1.2" height="101.3" fill="rgba(190,215,250,0.55)"/>
<rect x="1504.4" y="1090.2" width="95" height="107.3" rx="12" fill="rgba(66,148,252,0.5)" stroke="rgba(66,148,252,0.35)" stroke-width="1.5"/>
<rect x="1507.4" y="1093.2" width="89" height="101.3" rx="9" fill="none" stroke="rgba(190,215,250,0.55)" stroke-width="1.2"/>
<rect x="1551.4" y="1093.2" width="1.2" height="101.3" fill="rgba(190,215,250,0.55)"/>
<rect x="1369.5" y="1225" width="107.5" height="96" rx="12" fill="rgba(66,148,252,0.5)" stroke="rgba(66,148,252,0.35)" stroke-width="1.5"/>
<rect x="1372.5" y="1228" width="101.5" height="90" rx="9" fill="none" stroke="rgba(190,215,250,0.55)" stroke-width="1.2"/>
<rect x="1372.5" y="1273.1" width="101.5" height="1.2" fill="rgba(190,215,250,0.55)"/>
<g filter="url(#sh)">
<text class="sans" x="1300.4" y="174.5" font-size="74" fill="#fff4b2" textLength="280.2" lengthAdjust="spacingAndGlyphs">dock top</text>
<text class="sans" x="1236.4" y="1674.0" font-size="74" fill="#fff4b2" textLength="406.2" lengthAdjust="spacingAndGlyphs">dock bottom</text>
<text class="sans" x="1292.0" y="933.9" font-size="74" fill="#fff4b2" textLength="263.6" lengthAdjust="spacingAndGlyphs">split top</text>
<text class="sans" x="1013.4" y="1033.0" font-size="74" fill="#fff4b2" textLength="299.8" lengthAdjust="spacingAndGlyphs">make tab</text>
<text class="sans" x="947.9" y="1168.0" font-size="74" fill="#fff4b2" textLength="264.7" lengthAdjust="spacingAndGlyphs">split left</text>
<text class="sans" x="1633.0" y="1168.0" font-size="74" fill="#fff4b2" textLength="305.6" lengthAdjust="spacingAndGlyphs">split right</text>
<text class="sans" x="1228.4" y="1396.0" font-size="74" fill="#fff4b2" textLength="389.6" lengthAdjust="spacingAndGlyphs">split bottom</text>
<rect x="1435.7" y="194.0" width="8.9" height="36.6" fill="#fff4b2"/>
<rect x="1435.4" y="1578.0" width="9.3" height="36.0" fill="#fff4b2"/>
<rect x="1420.0" y="953.0" width="8.5" height="36.3" fill="#fff4b2"/>
<rect x="1420.0" y="1299.0" width="8.5" height="36.0" fill="#fff4b2"/>
<rect x="1231.0" y="1139.0" width="37.4" height="9.5" fill="#fff4b2"/>
<rect x="1577.4" y="1139.0" width="36.6" height="9.5" fill="#fff4b2"/>
<rect x="145.8" y="899.8" width="36.6" height="8.7" fill="#fff4b2"/>
<rect x="2697.5" y="900.0" width="36.5" height="8.7" fill="#fff4b2"/>
<path d="M1320 1040 L1367 1087" stroke="#fff4b2" stroke-width="7.5" stroke-linecap="butt"/>
<rect x="1364.2" y="1084.4" width="118.6" height="119.3" rx="13" fill="none" stroke="#fff4b2" stroke-width="4.5"/>
<g transform="translate(126.5,1041.2) rotate(-90)">
<text class="sans" x="-2.6" y="0.0" font-size="74" fill="#fff4b2" textLength="280.1" lengthAdjust="spacingAndGlyphs">dock left</text>
</g>
<g transform="translate(2753.8,745.8) rotate(90)">
<text class="sans" x="-2.6" y="0.0" font-size="74" fill="#fff4b2" textLength="321.4" lengthAdjust="spacingAndGlyphs">dock right</text>
</g>
</g>
</svg>
</body></html>
